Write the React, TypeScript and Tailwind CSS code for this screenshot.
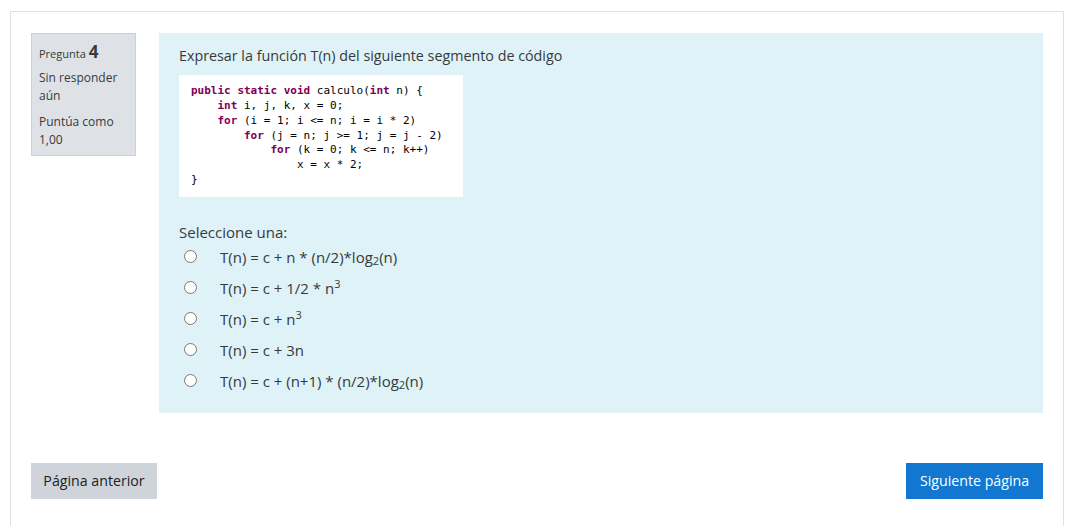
import React from 'react';

const kw = 'font-bold text-[#7f0055]';

const CodeBlock: React.FC = () => (
  <pre className="bg-white w-[284px] h-[122px] px-[12px] py-[9px] text-[11px] leading-[14.85px] text-[#000] font-['DejaVu_Sans_Mono',monospace]">
    <span className={kw}>public</span> <span className={kw}>static</span> <span className={kw}>void</span> calculo(<span className={kw}>int</span> n) {'{'}
    {'\n    '}<span className={kw}>int</span> i, j, k, x = 0;
    {'\n    '}<span className={kw}>for</span> (i = 1; i &lt;= n; i = i * 2)
    {'\n        '}<span className={kw}>for</span> (j = n; j &gt;= 1; j = j - 2)
    {'\n            '}<span className={kw}>for</span> (k = 0; k &lt;= n; k++)
    {'\n                '}x = x * 2;
    {'\n'}{'}'}
  </pre>
);

const options: React.ReactNode[] = [
  <>T(n) = c + n * (n/2)*log<sub className="text-[11px]">2</sub>(n)</>,
  <>T(n) = c + 1/2 * n<sup className="text-[11px]">3</sup></>,
  <>T(n) = c + n<sup className="text-[11px]">3</sup></>,
  <>T(n) = c + 3n</>,
  <>T(n) = c + (n+1) * (n/2)*log<sub className="text-[11px]">2</sub>(n)</>
];

const App: React.FC = () => {
  return (
    <div className="min-h-[526px] bg-white pt-[11px] pl-[10px] pr-[13px] font-['Open_Sans',sans-serif] text-[#373a3c]">
      <div className="border border-[#dee2e6] border-b-0 px-[20px] pt-[21px] pb-[27px]">
        <div className="flex gap-[23px]">
          <div className="w-[105px] h-[123px] shrink-0 bg-[#dee2e6] border border-[#cad0d7] px-[7px] pt-[9px] text-[#373a3c]">
            <div className="text-[11px] leading-[18px]">
              Pregunta <span className="text-[17px] font-bold">4</span>
            </div>
            <div className="text-[12px] leading-[18px] mt-[6px]">Sin responder aún</div>
            <div className="text-[12px] leading-[18px] mt-[8px]">Puntúa como 1,00</div>
          </div>
          <div className="flex-1 h-[380px] bg-[#def2f8] px-[20px] pt-[12px]">
            <p className="text-[14.3px] leading-[22px] text-[#373a3c]">
              Expresar la función T(n) del siguiente segmento de código
            </p>
            <div className="mt-[8px]">
              <CodeBlock />
            </div>
            <p className="text-[15px] leading-[22px] mt-[24px]">Seleccione una:</p>
            <div className="flex flex-col -mt-[2px]">
              {options.map((o, i) => (
                <label key={i} className="flex items-center h-[31px] pl-[5px]">
                  <input
                    type="radio"
                    name="q4"
                    className="w-[13px] h-[13px] m-0 accent-[#1177d1]"
                  />
                  <span className="ml-[23px] text-[15px] leading-[22px]">{o}</span>
                </label>
              ))}
            </div>
          </div>
        </div>
        <div className="flex justify-between mt-[50px]">
          <button className="h-[36px] w-[126px] bg-[#ced4da] text-[14.2px] text-[#1d2125]">
            Página anterior
          </button>
          <button className="h-[36px] w-[137px] bg-[#1177d1] text-[14.2px] text-white">
            Siguiente página
          </button>
        </div>
      </div>
    </div>
  );
};

export default App;
